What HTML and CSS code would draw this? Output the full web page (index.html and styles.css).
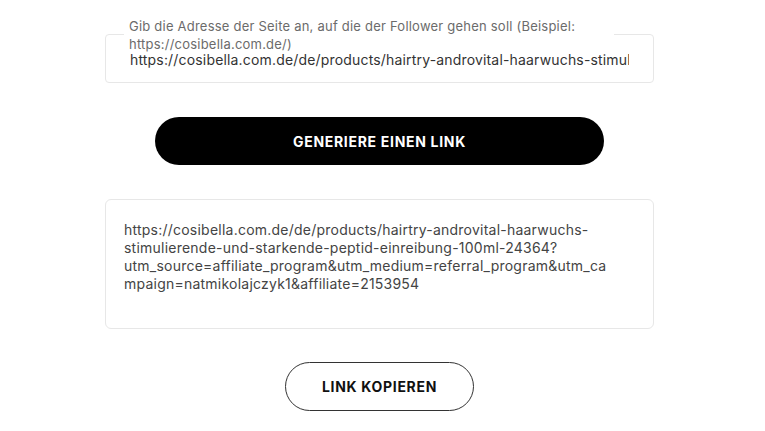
FILE: index.html
```html
<!DOCTYPE html>
<html lang="de">
<head>
<meta charset="utf-8">
<title>Link generieren</title>
<link rel="stylesheet" href="styles.css">
</head>
<body>
<main class="page">
  <div class="field">
    <label class="field-label" for="url">Gib die Adresse der Seite an, auf die der Follower gehen soll (Beispiel: https://cosibella.com.de/)</label>
    <input class="field-input" id="url" type="text" value="https://cosibella.com.de/de/products/hairtry-androvital-haarwuchs-stimulierende-und-starkende-peptid-einreibung-100ml-24364">
  </div>
  <button class="btn btn-dark" type="button">GENERIERE EINEN LINK</button>
  <div class="result">
    <span class="line">https://cosibella.com.de/de/products/hairtry-androvital-haarwuchs-</span>
    <span class="line">stimulierende-und-starkende-peptid-einreibung-100ml-24364?</span>
    <span class="line">utm_source=affiliate_program&amp;utm_medium=referral_program&amp;utm_ca</span>
    <span class="line">mpaign=natmikolajczyk1&amp;affiliate=2153954</span>
  </div>
  <div class="copy-row">
    <button class="btn btn-outline" type="button">LINK KOPIEREN</button>
  </div>
</main>
</body>
</html>
```
FILE: styles.css
```css
* { box-sizing: border-box; }
html, body { margin: 0; padding: 0; background: #fff; }
body { font-family: Inter, "Open Sans", Arial, sans-serif; color: #333; }

.page {
  width: 549px;
  margin-left: 105px;
  display: flex;
  flex-direction: column;
}

.field {
  position: relative;
  margin-top: 34px;
  height: 49px;
  border: 1px solid #e7e7e7;
  border-radius: 4px;
}
.field-label {
  position: absolute;
  left: 18px;
  top: -18px;
  width: 490px;
  padding: 0 5px;
  background: #fff;
  font-size: 13px;
  letter-spacing: 0.22px;
  line-height: 18px;
  color: #6b6b6b;
}
.field-input {
  display: block;
  width: 100%;
  height: 100%;
  border: 0;
  outline: none;
  background: transparent;
  padding: 2px 24px 0 24px;
  font-family: inherit;
  font-size: 14px;
  letter-spacing: 0.17px;
  color: #333;
}

.btn {
  font-family: inherit;
  font-weight: 700;
  font-size: 14px;
  letter-spacing: 0.7px;
  border-radius: 999px;
  cursor: pointer;
}
.btn-dark {
  margin: 34px 0 0 50px;
  width: 449px;
  height: 48px;
  border: 0;
  background: #000;
  color: #fff;
}

.result {
  margin-top: 34px;
  height: 130px;
  border: 1px solid #e7e7e7;
  border-radius: 6px;
  padding: 21px 18px;
  font-size: 14px;
  letter-spacing: 0.23px;
  line-height: 18px;
  color: #444;
}
.line { display: block; white-space: nowrap; }

.copy-row {
  display: flex;
  justify-content: center;
  margin-top: 33px;
}
.btn-outline {
  width: 189px;
  height: 49px;
  background: #fff;
  border: 1px solid #333;
  color: #111;
}
```
